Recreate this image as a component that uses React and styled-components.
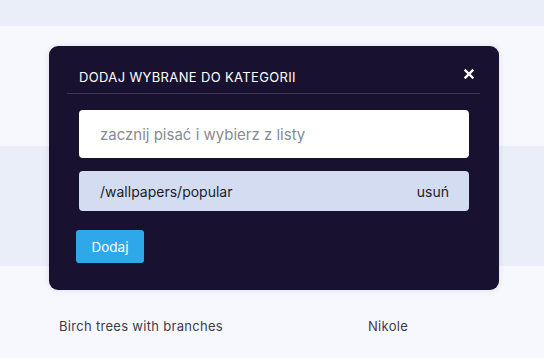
import React from "react";
import styled, { createGlobalStyle } from "styled-components";

const Global = createGlobalStyle`
  html, body { margin: 0; padding: 0; }
  body {
    width: 544px;
    height: 358px;
    overflow: hidden;
    background: #f7f8fd;
    font-family: "Inter", "Noto Sans", sans-serif;
  }
`;

const Page = styled.div`
  position: relative;
  width: 544px;
  height: 358px;
  overflow: hidden;
`;

const Table = styled.div`
  display: flex;
  flex-direction: column;
`;

const HeaderBand = styled.div`
  height: 26px;
  background: #e9eef8;
`;

const Row = styled.div`
  height: 120px;
  background: ${(p) => (p.$alt ? "#e9eef8" : "#f7f8fd")};
  display: grid;
  grid-template-columns: 309px 1fr;
  align-items: center;
  padding-left: 59px;
  font-size: 13px;
  letter-spacing: 0.3px;
  color: #3c3c48;
`;

const Cell = styled.div`
  white-space: nowrap;
`;

const Modal = styled.div`
  position: absolute;
  left: 49px;
  top: 46px;
  width: 450px;
  height: 244px;
  box-sizing: border-box;
  background: #181230;
  border-radius: 9px;
  box-shadow: 0 0 6px rgba(40, 40, 90, 0.12);
  padding: 0 30px 0 27px;
  display: flex;
  flex-direction: column;
`;

const ModalHeader = styled.div`
  height: 48px;
  margin: 0 -11px 0 -9px;
  padding: 14px 12px 0 12px;
  border-bottom: 1px solid #3a344c;
  display: flex;
  align-items: center;
  justify-content: space-between;
  box-sizing: border-box;
`;

const Title = styled.h2`
  margin: 0;
  font-size: 13px;
  font-weight: 400;
  color: #ffffff;
  letter-spacing: 0.35px;
`;

const Close = styled.button`
  border: 0;
  background: none;
  padding: 0;
  margin-right: -7px;
  margin-top: -6px;
  width: 12px;
  height: 12px;
  display: flex;
  align-items: center;
  justify-content: center;
  cursor: pointer;
`;

const Input = styled.input`
  margin: 16px 0 0 3px;
  height: 48px;
  box-sizing: border-box;
  border: 0;
  border-radius: 4px;
  background: #ffffff;
  padding: 0 21px;
  font-family: inherit;
  font-size: 15px;
  color: #333;
  outline: none;
  &::placeholder {
    color: #8a8a92;
  }
`;

const Chip = styled.div`
  margin: 13px 0 0 3px;
  height: 40px;
  border-radius: 4px;
  background: #d3dcf0;
  display: flex;
  align-items: center;
  justify-content: space-between;
  padding: 0 20px 0 21px;
  font-size: 14px;
  color: #1c1c28;
`;

const Remove = styled.span`
  cursor: pointer;
`;

const AddButton = styled.button`
  align-self: flex-start;
  margin-top: 19px;
  height: 33px;
  width: 68px;
  border: 0;
  border-radius: 3px;
  background: #2ea8e9;
  color: #ffffff;
  font-family: inherit;
  font-size: 13.5px;
  cursor: pointer;
`;

export default function App() {
  return (
    <Page>
      <Global />
      <Table>
        <HeaderBand />
        <Row />
        <Row $alt />
        <Row>
          <Cell>Birch trees with branches</Cell>
          <Cell>Nikole</Cell>
        </Row>
      </Table>
      <Modal>
        <ModalHeader>
          <Title>DODAJ WYBRANE DO KATEGORII</Title>
          <Close aria-label="Zamknij">
            <svg width="10" height="10" viewBox="0 0 10 10">
              <path d="M1.5 1.5 L8.5 8.5 M8.5 1.5 L1.5 8.5" stroke="#fff" strokeWidth="2.4" strokeLinecap="square" />
            </svg>
          </Close>
        </ModalHeader>
        <Input placeholder="zacznij pisać i wybierz z listy" />
        <Chip>
          <span>/wallpapers/popular</span>
          <Remove>usuń</Remove>
        </Chip>
        <AddButton>Dodaj</AddButton>
      </Modal>
    </Page>
  );
}
